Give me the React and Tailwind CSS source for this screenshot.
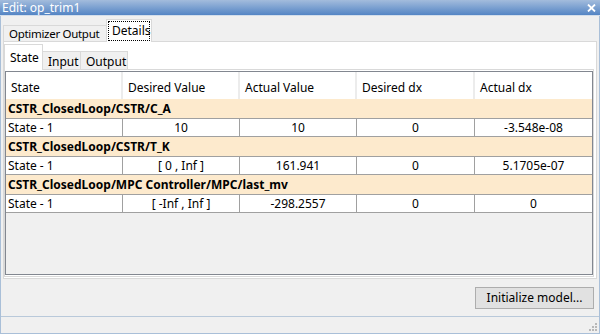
import React from "react";

const cols = [117, 117, 117, 118, 117];

function HeaderRow() {
  const names = ["State", "Desired Value", "Actual Value", "Desired dx", "Actual dx"];
  return (
    <div className="flex h-[27px] bg-white">
      {names.map((n, i) => (
        <div
          key={n}
          style={{ width: cols[i] }}
          className={`flex items-center pl-[5px] pt-[4px] shrink-0 ${i < 4 ? "border-r-2 border-[#ececec]" : ""}`}
        >
          {n}
        </div>
      ))}
    </div>
  );
}

function GroupRow({ label }) {
  return (
    <div className="h-[19px] bg-[#fdeacd] flex items-center pl-[2px] font-bold">{label}</div>
  );
}

function DataRow({ values }) {
  return (
    <div className="flex h-[19px] bg-white border-t border-b border-[#a0a0a0]">
      {values.map((v, i) => (
        <div
          key={i}
          style={{ width: cols[i] }}
          className={`flex items-center shrink-0 ${i === 0 ? "pl-[2px]" : "justify-center"} ${i < 4 ? "border-r border-[#a0a0a0]" : ""}`}
        >
          {v}
        </div>
      ))}
    </div>
  );
}

export default function App() {
  return (
    <div
      className="w-[600px] h-[334px] flex flex-col bg-[#f0f0f0] text-[12px] text-black leading-none overflow-hidden whitespace-nowrap"
      style={{ fontFamily: '"Noto Sans", "Open Sans", sans-serif' }}
    >
      {/* Title bar */}
      <div className="h-[16px] shrink-0 flex items-center justify-between bg-gradient-to-b from-[#a3bcdc] to-[#5485c4] border-b border-[#d3deeb] pl-[2px] pr-[4px]">
        <span className="text-white text-[12px]">Edit: op_trim1</span>
        <svg width="9" height="8" viewBox="0 0 9 8">
          <path d="M1 0.5 L8 7.5 M8 0.5 L1 7.5" stroke="white" strokeWidth="1.8" />
        </svg>
      </div>

      {/* Body */}
      <div className="flex-1 flex flex-col border-l border-r border-b border-[#a9bfd8]">
        {/* Outer tabs */}
        <div className="flex items-end h-[22px] mt-[3px] ml-[2px] relative z-10">
          <div className="h-[16px] w-[103px] border-t border-l border-[#d9d9d9] bg-[#f0f0f0] flex items-center pl-[5px] pt-[1px] text-[11.5px] tracking-[-0.3px]">
            Optimizer Output
          </div>
          <div className="h-[23px] w-[46px] -mb-px border-t border-l border-r border-[#d9d9d9] bg-white p-[1px]">
            <div className="h-full w-full border border-dotted border-black flex items-center pl-[3px]">
              Details
            </div>
          </div>
        </div>

        {/* Outer panel */}
        <div className="ml-[2px] w-[594px] h-[238px] border border-[#d9d9d9] bg-white flex flex-col">
          {/* Inner tabs */}
          <div className="flex items-end h-[26px] mt-[1px] relative z-10">
            <div className="h-[26px] w-[39px] -mb-px border-t border-l border-r border-[#d9d9d9] bg-white flex items-center pl-[5px]">
              State
            </div>
            <div className="h-[18px] w-[38px] border-t border-r border-[#d9d9d9] bg-[#f0f0f0] flex items-center pl-[5px] pt-[2px]">
              Input
            </div>
            <div className="h-[18px] w-[47px] border-t border-r border-[#d9d9d9] bg-[#f0f0f0] flex items-center pl-[5px] pt-[2px]">
              Output
            </div>
          </div>

          {/* Inner panel */}
          <div className="w-[590px] h-[208px] border border-[#d9d9d9] bg-white">
            <div className="mt-[1px] w-[588px] h-[204px] border border-[#828790] bg-[#f0f0f0] flex flex-col">
              <HeaderRow />
              <GroupRow label="CSTR_ClosedLoop/CSTR/C_A" />
              <DataRow values={["State - 1", "10", "10", "0", "-3.548e-08"]} />
              <GroupRow label="CSTR_ClosedLoop/CSTR/T_K" />
              <DataRow values={["State - 1", "[ 0 , Inf ]", "161.941", "0", "5.1705e-07"]} />
              <GroupRow label="CSTR_ClosedLoop/MPC Controller/MPC/last_mv" />
              <DataRow values={["State - 1", "[ -Inf , Inf ]", "-298.2557", "0", "0"]} />
            </div>
          </div>
        </div>

        {/* Button row */}
        <div className="flex justify-end mt-[8px] pr-[5px]">
          <button className="h-[22px] w-[119px] bg-[#e1e1e1] border border-[#adadad] flex items-center justify-center">
            Initialize model...
          </button>
        </div>

        {/* Status bar */}
        <div className="mt-auto h-[17px] border-t border-[#b9c9da] flex justify-end items-end pr-[1px] pb-[1px]">
          <svg width="10" height="10" viewBox="0 0 10 10">
            <rect x="7" y="1" width="2" height="2" fill="#b8b8b8" />
            <rect x="4" y="4" width="2" height="2" fill="#b8b8b8" />
            <rect x="7" y="4" width="2" height="2" fill="#b8b8b8" />
            <rect x="1" y="7" width="2" height="2" fill="#b8b8b8" />
            <rect x="4" y="7" width="2" height="2" fill="#b8b8b8" />
            <rect x="7" y="7" width="2" height="2" fill="#b8b8b8" />
          </svg>
        </div>
      </div>
    </div>
  );
}
